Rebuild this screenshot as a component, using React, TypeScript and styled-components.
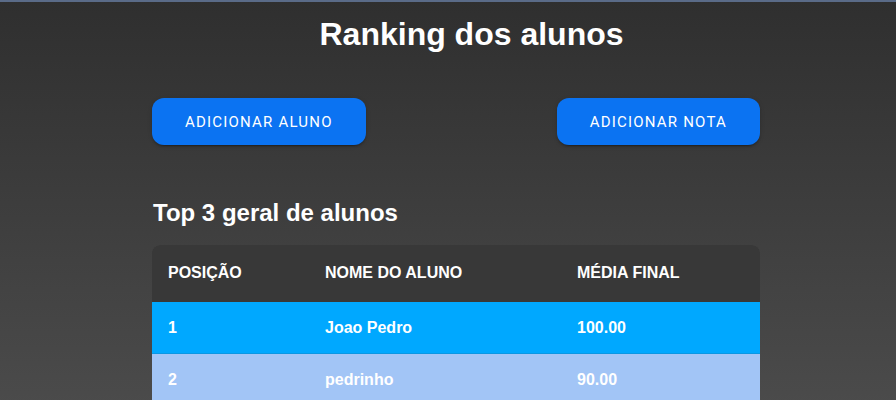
import React from "react";
import styled, { createGlobalStyle } from "styled-components";

const Global = createGlobalStyle`
  html, body { margin: 0; padding: 0; }
  body {
    min-height: 100vh;
    background: linear-gradient(180deg, #2f2f2f 0%, #4b4b4b 100%);
    border-top: 2px solid #5a6b88;
    box-sizing: border-box;
    font-family: "Liberation Sans", Arial, sans-serif;
    color: #ffffff;
  }
`;

const Page = styled.main`
  display: flex;
  flex-direction: column;
  align-items: center;
`;

const Title = styled.h1`
  margin: 14px 0 0;
  padding-left: 47px;
  font-size: 32px;
  font-weight: 700;
  line-height: 37px;
  text-align: center;
  width: 100%;
  box-sizing: border-box;
`;

const Content = styled.section`
  width: 608px;
  margin-left: 16px;
  display: flex;
  flex-direction: column;
`;

const Actions = styled.div`
  display: flex;
  justify-content: space-between;
  margin-top: 45px;
`;

const Button = styled.button`
  height: 47px;
  padding: 0 33px;
  border: none;
  border-radius: 12px;
  background: #0b73f2;
  color: #ffffff;
  font-family: Roboto, "Liberation Sans", sans-serif;
  font-size: 15px;
  font-weight: 400;
  letter-spacing: 1.2px;
  text-transform: uppercase;
  box-shadow: 0 3px 1px -2px rgba(0, 0, 0, 0.2), 0 2px 2px 0 rgba(0, 0, 0, 0.14),
    0 1px 5px 0 rgba(0, 0, 0, 0.12);
  cursor: pointer;
`;

const Subtitle = styled.h2`
  margin: 54px 0 0 1px;
  font-size: 24px;
  font-weight: 700;
  line-height: 28px;
`;

const Table = styled.div`
  margin-top: 18px;
  border-radius: 8px 8px 0 0;
  overflow: hidden;
  box-shadow: inset 0 1px 0 rgba(255, 255, 255, 0.08);
`;

const Row = styled.div<{ $bg: string; $h: number; $border?: string }>`
  display: grid;
  grid-template-columns: 157px 252px 199px;
  align-items: center;
  height: ${(p) => p.$h}px;
  background: ${(p) => p.$bg};
  border-bottom: 1px solid ${(p) => p.$border ?? "transparent"};
`;

const Cell = styled.div<{ $upper?: boolean }>`
  padding-left: 16px;
  font-size: 16px;
  font-weight: 700;
  color: #ffffff;
  text-transform: ${(p) => (p.$upper ? "uppercase" : "none")};
`;

const students = [
  { pos: 1, name: "Joao Pedro", avg: "100.00", bg: "#00a8ff", border: "#0a97e3" },
  { pos: 2, name: "pedrinho", avg: "90.00", bg: "#a2c5f6", border: "#8fb4e6" },
];

export default function App() {
  return (
    <>
      <Global />
      <Page>
        <Title>Ranking dos alunos</Title>
        <Content>
          <Actions>
            <Button>Adicionar aluno</Button>
            <Button>Adicionar nota</Button>
          </Actions>
          <Subtitle>Top 3 geral de alunos</Subtitle>
          <Table>
            <Row $bg="#383838" $h={56}>
              <Cell $upper>Posição</Cell>
              <Cell $upper>Nome do aluno</Cell>
              <Cell $upper>Média final</Cell>
            </Row>
            {students.map((s) => (
              <Row key={s.pos} $bg={s.bg} $h={51} $border={s.border}>
                <Cell>{s.pos}</Cell>
                <Cell>{s.name}</Cell>
                <Cell>{s.avg}</Cell>
              </Row>
            ))}
          </Table>
        </Content>
      </Page>
    </>
  );
}
